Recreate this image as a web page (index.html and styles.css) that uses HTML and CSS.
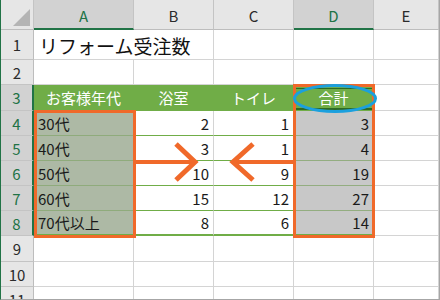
FILE: index.html
```html
<!DOCTYPE html>
<html lang="ja">
<head>
<meta charset="utf-8">
<link rel="stylesheet" href="styles.css">
</head>
<body>
<div class="sheet">
  <div class="grid">
    <div class="corner"><span class="tri"></span></div>
    <div class="hd col sel">A</div>
    <div class="hd col">B</div>
    <div class="hd col">C</div>
    <div class="hd col sel">D</div>
    <div class="hd col">E</div>

    <div class="hd row">1</div>
    <div class="c title">リフォーム受注数</div>
    <div class="c"></div>
    <div class="c"></div>
    <div class="c"></div>

    <div class="hd row">2</div>
    <div class="c"></div><div class="c"></div><div class="c"></div><div class="c"></div><div class="c"></div>

    <div class="hd row rsel">3</div>
    <div class="c tg">お客様年代</div>
    <div class="c tg">浴室</div>
    <div class="c tg">トイレ</div>
    <div class="c tg tgsel">合計</div>
    <div class="c"></div>

    <div class="hd row rsel">4</div>
    <div class="c ta">30代</div>
    <div class="c tn">2</div>
    <div class="c tn">1</div>
    <div class="c td">3</div>
    <div class="c"></div>

    <div class="hd row rsel">5</div>
    <div class="c ta">40代</div>
    <div class="c tn">3</div>
    <div class="c tn">1</div>
    <div class="c td">4</div>
    <div class="c"></div>

    <div class="hd row rsel">6</div>
    <div class="c ta">50代</div>
    <div class="c tn">10</div>
    <div class="c tn">9</div>
    <div class="c td">19</div>
    <div class="c"></div>

    <div class="hd row rsel">7</div>
    <div class="c ta">60代</div>
    <div class="c tn">15</div>
    <div class="c tn">12</div>
    <div class="c td">27</div>
    <div class="c"></div>

    <div class="hd row rsel">8</div>
    <div class="c ta last">70代以上</div>
    <div class="c tn last">8</div>
    <div class="c tn last">6</div>
    <div class="c td last">14</div>
    <div class="c"></div>

    <div class="hd row">9</div>
    <div class="c"></div><div class="c"></div><div class="c"></div><div class="c"></div><div class="c"></div>

    <div class="hd row">10</div>
    <div class="c"></div><div class="c"></div><div class="c"></div><div class="c"></div><div class="c"></div>

    <div class="hd row">11</div>
    <div class="c"></div><div class="c"></div><div class="c"></div><div class="c"></div><div class="c"></div>
  </div>

  <svg class="overlay" width="440" height="300" viewBox="0 0 440 300" aria-hidden="true">
    <g fill="none" stroke="#f0692a">
      <rect x="35.5" y="111.5" width="99" height="125" stroke-width="3"/>
      <rect x="294.5" y="85.5" width="79" height="151" stroke-width="3"/>
      <line x1="136" y1="162" x2="196" y2="162" stroke-width="4"/>
      <polyline points="176,144 195,162 176,180" stroke-width="5" stroke-linejoin="miter" stroke-miterlimit="10"/>
      <line x1="293" y1="162" x2="233" y2="162" stroke-width="4"/>
      <polyline points="253,144 233,162 253,180" stroke-width="5" stroke-linejoin="miter" stroke-miterlimit="10"/>
    </g>
    <ellipse cx="335" cy="98.5" rx="40.5" ry="13" fill="none" stroke="#1ba0de" stroke-width="3"/>
  </svg>
</div>
</body>
</html>
```

FILE: styles.css
```css
* { box-sizing: border-box; }

html, body {
  margin: 0;
  padding: 0;
  background: #ffffff;
}

body {
  font-family: "Noto Sans CJK JP", "Noto Sans", sans-serif;
  color: #1a1a1a;
}

.sheet {
  position: relative;
  width: 440px;
  height: 300px;
  overflow: hidden;
  border-left: 1px solid #217346;
  border-right: 1px solid #a6a6a6;
  border-bottom: 1px solid #a6a6a6;
  background: #ffffff;
}

.grid {
  display: grid;
  grid-template-columns: 33px 100px 80px 80px 80px 1fr;
  grid-template-rows: 30px 30px 25px 26px 25px 25px 25px 25px 25px 26px 25px 25px;
}

.corner {
  background: #e6e6e6;
  border-right: 1px solid #c4c4c4;
  border-bottom: 1px solid #bdbdbd;
  display: flex;
  align-items: flex-end;
  justify-content: flex-end;
  padding: 0 3px 3px 0;
}

.tri {
  width: 17px;
  height: 17px;
  background: #b4b4b4;
  clip-path: polygon(100% 0, 100% 100%, 0 100%);
}

.hd {
  background: #e6e6e6;
  display: flex;
  align-items: center;
  justify-content: center;
  font-size: 15px;
  line-height: 1;
  color: #2b2b2b;
}

.col {
  border-right: 1px solid #c4c4c4;
  border-bottom: 1px solid #bdbdbd;
  padding-top: 2px;
}

.col.sel {
  background: #d2d2d2;
  color: #217346;
  border-bottom: 2px solid #217346;
}

.row {
  border-right: 1px solid #bdbdbd;
  border-bottom: 1px solid #c4c4c4;
}

.row.rsel {
  background: #d2d2d2;
  color: #217346;
  border-right: 2px solid #217346;
}

.c {
  border-right: 1px solid #d4d4d4;
  border-bottom: 1px solid #d4d4d4;
  display: flex;
  align-items: center;
  padding: 0 4px;
  font-size: 15px;
  line-height: 1;
  white-space: nowrap;
}

.title {
  grid-column: span 2;
  font-size: 19px;
  padding-left: 5px;
  padding-top: 1px;
  color: #111111;
}

.tg {
  background: #70ad47;
  color: #ffffff;
  justify-content: center;
  border-right-color: #70ad47;
  border-bottom-color: #70ad47;
}

.tgsel {
  box-shadow: inset 0 3px 0 #70ad47, inset 0 4px 0 #2f6a24, inset 0 -2px 0 #2f6a24;
}

.ta {
  background: #adb9a5;
  border-bottom-color: #8fab7c;
}

.tn {
  justify-content: flex-end;
  border-bottom-color: #70ad47;
}

.td {
  background: #c8c8c8;
  justify-content: flex-end;
  border-bottom-color: #93ad80;
}

.last {
  border-bottom: 2px solid #70ad47;
}

.overlay {
  position: absolute;
  left: -1px;
  top: 0;
  pointer-events: none;
}
```
